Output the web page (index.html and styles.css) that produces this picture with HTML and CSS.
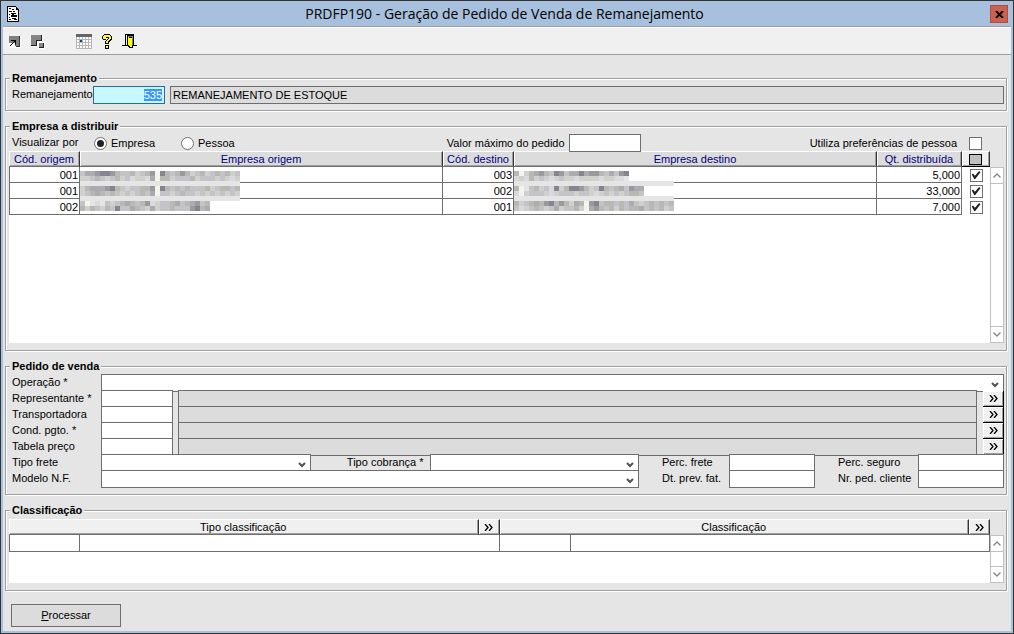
FILE: index.html
```html
<!DOCTYPE html>
<html lang="pt-BR">
<head>
    <meta charset="UTF-8">
    <meta name="viewport" content="width=device-width, initial-scale=1.0">
    <title>PRDFP190 - Geração de Pedido de Venda de Remanejamento</title>
    <link rel="stylesheet" href="styles.css">
</head>
<body>

    <svg class="defs" aria-hidden="true">
        <symbol id="more" viewBox="0 0 9 7">
            <path d="M1 0l3 3.5L1 7M5 0l3 3.5L5 7" fill="none" stroke="#000" stroke-width="1.3" />
        </symbol>
        <symbol id="up" viewBox="0 0 8 5">
            <path d="M.5 4.5L4 1l3.500 3.500" fill="none" stroke="#858585" stroke-width="1.3" />
        </symbol>
        <symbol id="down" viewBox="0 0 8 5">
            <path d="M.5 .5L4 4l3.500-3.500" fill="none" stroke="#858585" stroke-width="1.3" />
        </symbol>
    </svg>

    <div class="window">
        <header class="titlebar">
            <svg class="app-icon" width="12" height="16" viewBox="0 0 12 16" shape-rendering="crispEdges">
                <path d="M0 0h9v1h1v1h1v1h1v13H0z" fill="#000" />
                <path d="M1 1h8v3h2v11H1z" fill="#fff" />
                <path d="M2 2h2v1H2zM5 3h2v1H5zM2 5h3v1H2zM6 5h2v1H6zM4 7h5v1H4zM2 8h1v1H2zM5 8h2v1H5zM4 9h6v2H4zM2 11h1v1H2zM5 12h4v1H5zM2 13h2v1H2zM7 13h3v1H7z" fill="#000" />
            </svg>
            <h1>PRDFP190 - Geração de Pedido de Venda de Remanejamento</h1>
            <button class="close" aria-label="Fechar">
                <svg width="9" height="7" viewBox="0 0 9 7"><path d="M1 0l7 7M8 0L1 7" stroke="#000" stroke-width="2" /></svg>
            </button>
        </header>

        <nav class="toolbar">
            <button aria-label="Executar">
                <svg width="12" height="12" viewBox="0 0 12 12" shape-rendering="crispEdges">
                    <path d="M0 3h12v9H0z" fill="#fff" />
                    <path d="M0 0h10v10H6V7H0z" fill="#808080" />
                    <path d="M10 0h1v11H7v-1h3z" fill="#333" />
                    <path d="M2 4h5v5H6V6H5v1H4V6h1V5H2zM3 7h1v1H3zM2 8h1v1H2zM1 9h1v1H1z" fill="#000" />
                </svg>
            </button>
            <button aria-label="Organizar">
                <svg width="14" height="14" viewBox="0 0 14 14" shape-rendering="crispEdges">
                    <path d="M0 0h12v7H7v5H0zM7 7h7v7H7z" fill="#fff" />
                    <path d="M0 0h10v5H5v5H0zM8 8h4v4H8z" fill="#858585" />
                    <path d="M10 0h1v6H6v5H0v-1h5V5h5zM12 8h1v5H8v-1h4z" fill="#222" />
                </svg>
            </button>
            <button class="spaced" aria-label="Calendário">
                <svg width="16" height="15" viewBox="0 0 16 15" shape-rendering="crispEdges">
                    <path d="M0 0h16v15H0z" fill="#b5b5b5" />
                    <path d="M0 0h16v3H0z" fill="#666" />
                    <path d="M1 3h2v2H1zM4 3h2v2H4zM7 3h2v2H7zM10 3h2v2h-2zM13 3h2v2h-2zM1 6h2v2H1zM7 6h2v2H7zM10 6h2v2h-2zM13 6h2v2h-2zM1 9h2v2H1zM4 9h2v2H4zM7 9h2v2H7zM10 9h2v2h-2zM13 9h2v2h-2zM1 12h2v2H1zM4 12h2v2H4zM7 12h2v2H7zM10 12h2v2h-2zM13 12h2v2h-2z" fill="#fff" />
                    <path d="M4 6h2v2H4z" fill="#06457f" />
                </svg>
            </button>
            <button aria-label="Ajuda">
                <svg width="10" height="15" viewBox="0 0 10 15" shape-rendering="crispEdges">
                    <path d="M2 0h6v1h1v1h1v4H9v1H8v1H7v2H3V7h1V6h1V5h1V4H4v2H1V5H0V2h1V1h1zM3 11h4v4H3z" fill="#000" />
                    <path d="M2 1h6v1h1v3H8v1H7v1H6v2H4V7h1V6h1V5h1V3H4v2H1V2h1zM4 12h2v2H4z" fill="#ff0" />
                </svg>
            </button>
            <button aria-label="Sair">
                <svg width="15" height="15" viewBox="0 0 15 15" shape-rendering="crispEdges">
                    <path d="M3 0h9v11h3v1H0v-1h3z" fill="#000" />
                    <path d="M4 1h1v10H4z" fill="#f0f0f0" />
                    <path d="M5 1h6v13H7v-1H6v-1H5z" fill="#000" />
                    <path d="M6 3h1v1h3v9H8v-1H7v-1H6z" fill="#ff0" />
                    <path d="M6 2h5v1H6zM10 3h1v8h-1z" fill="#808080" />
                </svg>
            </button>
        </nav>

        <main>
            <fieldset>
                <legend>Remanejamento</legend>
                <div class="row">
                    <label class="lbl-short" for="reman">Remanejamento</label>
                    <input class="code current" id="reman" type="text" value="535">
                    <input class="grow" type="text" value="REMANEJAMENTO DE ESTOQUE" aria-label="Descrição" readonly>
                </div>
            </fieldset>

            <fieldset>
                <legend>Empresa a distribuir</legend>
                <div class="options">
                    <div class="view-by">
                        <span>Visualizar por</span>
                        <label><input type="radio" name="ver" checked>Empresa</label>
                        <label><input type="radio" name="ver">Pessoa</label>
                    </div>
                    <div class="limits">
                        <label class="max">Valor máximo do pedido <input class="code" type="text"></label>
                        <label>Utiliza preferências de pessoa <input type="checkbox"></label>
                    </div>
                </div>
                <div class="list companies">
                    <div class="sheet">
                        <table>
                            <colgroup>
                                <col class="c-code"><col><col class="c-code"><col><col class="c-qty"><col class="c-check">
                            </colgroup>
                            <thead>
                                <tr>
                                    <th>Cód. origem</th>
                                    <th>Empresa origem</th>
                                    <th>Cód. destino</th>
                                    <th>Empresa destino</th>
                                    <th>Qt. distribuída</th>
                                    <th class="mark"><button class="mark-all" aria-label="Marcar todos"></button></th>
                                </tr>
                            </thead>
                            <tbody>
                                <tr>
                                    <td>001</td>
                                    <td class="masked"><svg class="mosaic" id="maskFrom" width="160" height="43"></svg></td>
                                    <td>003</td>
                                    <td class="masked"><svg class="mosaic" id="maskTo" width="160" height="43"></svg></td>
                                    <td>5,000</td>
                                    <td class="mark"><input type="checkbox" aria-label="Distribuir 5,000" checked></td>
                                </tr>
                                <tr>
                                    <td>001</td>
                                    <td></td>
                                    <td>002</td>
                                    <td></td>
                                    <td>33,000</td>
                                    <td class="mark"><input type="checkbox" aria-label="Distribuir 33,000" checked></td>
                                </tr>
                                <tr>
                                    <td>002</td>
                                    <td></td>
                                    <td>001</td>
                                    <td></td>
                                    <td>7,000</td>
                                    <td class="mark"><input type="checkbox" aria-label="Distribuir 7,000" checked></td>
                                </tr>
                            </tbody>
                        </table>
                    </div>
                    <div class="scroll">
                        <button aria-label="Acima"><svg width="8" height="5"><use href="#up" /></svg></button>
                        <button aria-label="Abaixo"><svg width="8" height="5"><use href="#down" /></svg></button>
                    </div>
                </div>
            </fieldset>

            <fieldset>
                <legend>Pedido de venda</legend>
                <div class="row">
                    <label class="lbl" for="operacao">Operação *</label>
                    <select class="grow" id="operacao"></select>
                </div>
                <div class="row">
                    <label class="lbl" for="repres">Representante *</label>
                    <input class="code" id="repres" type="text">
                    <input class="grow" type="text" aria-label="Nome do representante" readonly>
                    <button class="more" aria-label="Buscar representante"><svg width="9" height="7"><use href="#more" /></svg></button>
                </div>
                <div class="row">
                    <label class="lbl" for="transp">Transportadora</label>
                    <input class="code" id="transp" type="text">
                    <input class="grow" type="text" aria-label="Nome da transportadora" readonly>
                    <button class="more" aria-label="Buscar transportadora"><svg width="9" height="7"><use href="#more" /></svg></button>
                </div>
                <div class="row">
                    <label class="lbl" for="cond">Cond. pgto. *</label>
                    <input class="code" id="cond" type="text">
                    <input class="grow" type="text" aria-label="Descrição da condição" readonly>
                    <button class="more" aria-label="Buscar condição"><svg width="9" height="7"><use href="#more" /></svg></button>
                </div>
                <div class="row">
                    <label class="lbl" for="tabela">Tabela preço</label>
                    <input class="code" id="tabela" type="text">
                    <input class="grow" type="text" aria-label="Descrição da tabela" readonly>
                    <button class="more" aria-label="Buscar tabela"><svg width="9" height="7"><use href="#more" /></svg></button>
                </div>
                <div class="details">
                    <label for="frete">Tipo frete</label>
                    <select id="frete"></select>
                    <label class="right" for="cobranca">Tipo cobrança *</label>
                    <select id="cobranca"></select>
                    <label class="side" for="percFrete">Perc. frete</label>
                    <input id="percFrete" type="text">
                    <label class="side" for="percSeguro">Perc. seguro</label>
                    <input id="percSeguro" type="text">

                    <label for="modelo">Modelo N.F.</label>
                    <select class="wide" id="modelo"></select>
                    <label class="side" for="prev">Dt. prev. fat.</label>
                    <input id="prev" type="text">
                    <label class="side" for="pedCliente">Nr. ped. cliente</label>
                    <input id="pedCliente" type="text">
                </div>
            </fieldset>

            <fieldset>
                <legend>Classificação</legend>
                <div class="list classes">
                    <div class="sheet">
                        <table>
                            <colgroup>
                                <col class="c-code"><col><col class="c-more"><col class="c-code"><col><col class="c-more">
                            </colgroup>
                            <thead>
                                <tr>
                                    <th colspan="2">Tipo classificação</th>
                                    <th><button aria-label="Buscar tipo"><svg width="9" height="7"><use href="#more" /></svg></button></th>
                                    <th colspan="2">Classificação</th>
                                    <th><button aria-label="Buscar classificação"><svg width="9" height="7"><use href="#more" /></svg></button></th>
                                </tr>
                            </thead>
                            <tbody>
                                <tr>
                                    <td><input type="text" aria-label="Código do tipo"></td>
                                    <td colspan="2"><input type="text" aria-label="Tipo"></td>
                                    <td><input type="text" aria-label="Código da classificação"></td>
                                    <td colspan="2"><input type="text" aria-label="Nome da classificação"></td>
                                </tr>
                            </tbody>
                        </table>
                    </div>
                    <div class="scroll">
                        <button aria-label="Acima"><svg width="8" height="5"><use href="#up" /></svg></button>
                        <button aria-label="Abaixo"><svg width="8" height="5"><use href="#down" /></svg></button>
                    </div>
                </div>
            </fieldset>

            <button class="process"><u>P</u>rocessar</button>
        </main>
    </div>

    <script>
        // one digit per 5px block: 0 is clear, 9 is the darkest
        const shades = ["none", "#f4f3ec", "#e5e5e5", "#dadade", "#d0d0cc", "#c4c4c8", "#b8b8b4", "#acacb0", "#9a9a9e", "#85858f"];
        const masks = {
            maskFrom: [
                "57789986556456819656864564565645",
                "44565456453443716645556455545434",
                "22222222222222222222222222222222",
                "46777896545566819656565556456656",
                "45676565454565715545655454545454",
                "22222222222222222222222222222222",
                "51232545676568345567567856000000",
                "64654659557654745565558967000000"
            ],
            maskTo: [
                "61467865985779788657589000000000",
                "34364543454434444344332000000000",
                "22222222222222222222222222222222",
                "61256453946998645965675877000000",
                "31455543455545543454545665000000",
                "22222222222222222222222222222222",
                "64567689686476189566565754565656",
                "53456545745564178656465667565645"
            ]
        };

        function drawMask(id) {
            const svg = document.getElementById(id);
            masks[id].forEach((line, row) => {
                for (let i = 0; i < line.length; i++) {
                    const block = document.createElementNS("http://www.w3.org/2000/svg", "rect");
                    block.setAttribute("x", i * 5);
                    block.setAttribute("y", row * 5);
                    block.setAttribute("width", 5);
                    block.setAttribute("height", 5);
                    block.setAttribute("fill", shades[line[i]]);
                    svg.appendChild(block);
                }
            });
        }

        drawMask("maskFrom");
        drawMask("maskTo");

        const reman = document.getElementById("reman");
        reman.focus();
        reman.select();
    </script>

</body>
</html>
```
FILE: styles.css
```css
* {
    box-sizing: border-box;
}

body {
    margin: 0;
    font-family: "Liberation Sans", Arial, sans-serif;
    font-size: 11px;
    line-height: 15px;
    color: #000;
}

.defs {
    display: none;
}

button, input, select {
    font: inherit;
    color: inherit;
    margin: 0;
    padding: 0;
    border: none;
    border-radius: 0;
    background: none;
    outline: none;
}

button {
    display: flex;
    align-items: center;
    justify-content: center;
}

.window {
    min-height: 100vh;
    display: flex;
    flex-direction: column;
    border: 1px solid #333;
    padding: 0 2px 2px;
    background: #a6c0dd;
}

/* title bar and toolbar */
.titlebar {
    display: flex;
    align-items: center;
    height: 25px;
    padding: 1px 3px 0 4px;
}

.titlebar h1 {
    flex: 1;
    margin: 0;
    text-align: center;
    font-family: "Open Sans", "Noto Sans", sans-serif;
    font-size: 14px;
    font-weight: normal;
    line-height: 20px;
}

.close {
    width: 18px;
    height: 18px;
    background: #cb6150;
    border: 1px solid #b84a3c;
}

.toolbar {
    display: flex;
    align-items: center;
    gap: 10px;
    height: 29px;
    padding: 2px 6px 0;
    background: #f0f0f0;
    border-top: 1px solid #a0a0a0;
    border-bottom: 1px solid #a0a0a0;
    box-shadow: inset 0 1px 0 #fff;
}

.toolbar .spaced {
    margin-left: 21px;
}

main {
    flex: 1;
    display: flex;
    flex-direction: column;
    gap: 8px;
    padding: 16px 4px 4px 2px;
    background: #e5e5e5;
}

/* groups */
fieldset {
    min-width: 0;
    margin: 0;
    padding: 0 2px 6px 3px;
    border: 1px solid #a0a0a0;
    box-shadow: 1px 1px 0 #fff, inset 1px 1px 0 #fff;
}

legend {
    margin-left: 1px;
    padding: 0 2px;
    background: #e5e5e5;
    font-weight: bold;
}

.row {
    display: flex;
    height: 16px;
    padding-left: 3px;
    line-height: 17px;
}

.lbl {
    width: 89px;
}

.lbl-short {
    width: 81px;
}

input[type="text"], select {
    height: 18px;
    min-width: 0;
    padding: 0 2px;
    border: 1px solid #6e6e6e;
    background-color: #fff;
}

input[readonly] {
    background-color: #dcdcdc;
}

.code {
    width: 72px;
}

.code + .grow {
    margin-left: 5px;
}

.grow {
    flex: 1;
}

.current {
    text-align: right;
}

input.current {
    background-color: #c8f8ff;
    border-color: #2b6b99;
}

.current::selection {
    background: #3399ff;
    color: #fff;
}

select {
    appearance: none;
    background-image: url("data:image/svg+xml,%3Csvg xmlns='http://www.w3.org/2000/svg' width='8' height='6'%3E%3Cpath d='M1 1l3 3 3-3' fill='none' stroke='%23505050' stroke-width='2'/%3E%3C/svg%3E");
    background-repeat: no-repeat;
    background-position: right 4px top 7px;
}

fieldset:first-of-type .row {
    height: 18px;
}

/* options above the company list */
.options {
    display: grid;
    grid-template-columns: 44fr 56fr;
    height: 17px;
    line-height: 17px;
}

.options label {
    display: flex;
    align-items: center;
}

.view-by {
    display: flex;
    padding-left: 3px;
}

.view-by span {
    width: 82px;
}

.view-by label {
    width: 87px;
    gap: 4px;
}

.limits {
    display: flex;
    justify-content: space-between;
    padding-right: 22px;
}

.limits label {
    gap: 12px;
}

.limits .max {
    gap: 4px;
}

.max input {
    position: relative;
}

input[type="radio"], input[type="checkbox"] {
    appearance: none;
    display: grid;
    place-items: center;
    width: 13px;
    height: 13px;
    border: 1px solid #707070;
    background: #fff;
}

input[type="radio"] {
    border-radius: 50%;
}

input[type="radio"]:checked::before {
    content: "";
    width: 7px;
    height: 7px;
    border-radius: 50%;
    background: #222;
}

input[type="checkbox"]:checked::before {
    content: "";
    width: 9px;
    height: 9px;
    background: #222;
    clip-path: polygon(0 40%, 20% 35%, 38% 58%, 85% 5%, 100% 20%, 42% 95%, 30% 95%);
}

/* lists */
.list {
    display: flex;
}

.companies {
    height: 192px;
    margin-bottom: 1px;
}

.classes {
    height: 64px;
    margin: 1px 0;
}

.sheet {
    flex: 1;
    background: #fff;
}

table {
    width: 100%;
    table-layout: fixed;
    border-collapse: separate;
    border-spacing: 0;
}

.c-code {
    width: 71px;
}

.c-qty {
    width: 85px;
}

.c-check {
    width: 28px;
}

.c-more {
    width: 21px;
}

th {
    height: 16px;
    padding: 0;
    font-weight: normal;
    line-height: 14px;
    border-top: 1px solid #fff;
    border-right: 1px solid #333;
    border-bottom: 1px solid #6e6e6e;
    box-shadow: inset 1px 0 0 #fff, inset -1px -1px 0 #a0a0a0;
}

.companies th {
    background: #dcdcdc;
    color: #000080;
}

.classes th {
    background: #f0f0f0;
}

th button {
    width: 100%;
    height: 12px;
}

.companies th.mark {
    background: #f0f0f0;
    border-bottom-color: #000;
}

th .mark-all {
    width: 13px;
    height: 11px;
    margin: 0 auto;
    border: 1px solid #000;
    background: #c0c0c0;
}

td {
    height: 16px;
    padding: 1px 1px 0 0;
    line-height: 14px;
    text-align: right;
    border-right: 1px solid #6e6e6e;
    border-bottom: 1px solid #6e6e6e;
}

td:first-child {
    border-left: 1px solid #6e6e6e;
}

td.mark {
    padding: 0;
    border: none;
}

td.mark input {
    margin: 0 auto;
}

.masked {
    position: relative;
}

.mosaic {
    position: absolute;
    left: 0;
    top: 4px;
}

.classes td {
    padding: 0;
}

td input[type="text"] {
    display: block;
    width: 100%;
    height: 16px;
    border: none;
}

.scroll {
    display: flex;
    flex-direction: column;
    justify-content: space-between;
    width: 14px;
    margin-top: 16px;
    border: 1px solid #c0c0c0;
    background: #fff;
}

.scroll button {
    height: 16px;
    border-bottom: 1px solid #c0c0c0;
}

.scroll button:last-child {
    border-top: 1px solid #c0c0c0;
    border-bottom: none;
}

/* order form */
.more {
    width: 21px;
    height: 16px;
    margin: 1px 0 0 6px;
    background: #f0f0f0;
    border-right: 1px solid #000;
    border-bottom: 1px solid #000;
    box-shadow: inset 1px 1px 0 #fff, inset -1px -1px 0 #a0a0a0;
}

.details {
    display: grid;
    grid-template-columns: 89px 1fr 119px 1fr 90px 86px 103px 86px;
    grid-auto-rows: 16px;
    padding-left: 3px;
    margin-bottom: 2px;
    line-height: 17px;
}

.details .right {
    padding-right: 6px;
    text-align: right;
}

.details .side {
    padding-left: 23px;
}

.details .wide {
    grid-column: span 3;
}

.process {
    width: 110px;
    height: 23px;
    margin: 5px 0 0 6px;
    border: 1px solid #6e6e6e;
    background: #dcdcdc;
}
```
